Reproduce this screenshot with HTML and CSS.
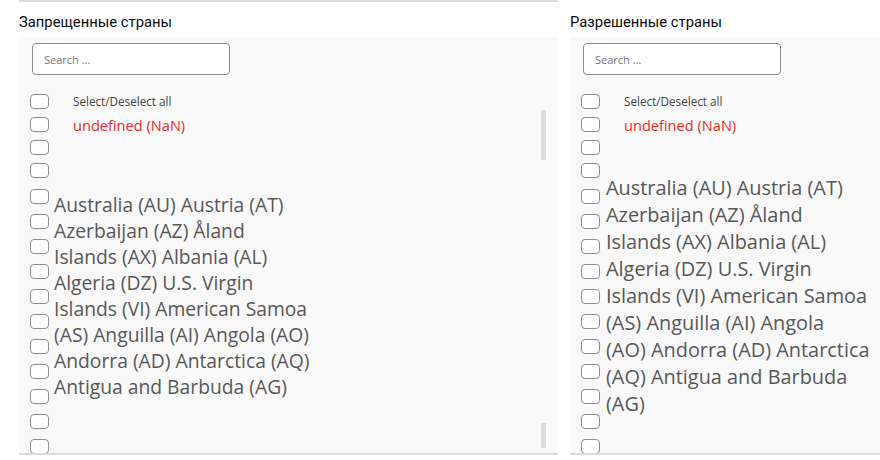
FILE: index.html
```html
<!DOCTYPE html>
<html>
<head>
<meta charset="utf-8">
<link rel="stylesheet" href="styles.css">
</head>
<body>
<div class="page">
  <section class="col col-left">
    <div class="topbar"></div>
    <h2 class="title">Запрещенные страны</h2>
    <div class="panel">
      <div class="search"><span class="ph">Search ...</span></div>
      <div class="list">
        <div class="boxes">
          <div class="row r-sm"><span class="cb"></span><span class="lbl sel">Select/Deselect all</span></div>
          <div class="row r-sm"><span class="cb"></span><span class="lbl red">undefined (NaN)</span></div>
          <div class="row r-sm"><span class="cb"></span></div>
          <div class="row r-sm4"><span class="cb"></span></div>
          <div class="row"><span class="cb"></span></div>
          <div class="row"><span class="cb"></span></div>
          <div class="row"><span class="cb"></span></div>
          <div class="row"><span class="cb"></span></div>
          <div class="row"><span class="cb"></span></div>
          <div class="row"><span class="cb"></span></div>
          <div class="row"><span class="cb"></span></div>
          <div class="row"><span class="cb"></span></div>
          <div class="row"><span class="cb"></span></div>
          <div class="row"><span class="cb"></span></div>
          <div class="row"><span class="cb"></span></div>
        </div>
        <div class="names names-left">Australia (AU) Austria (AT)<br>Azerbaijan (AZ) Åland<br>Islands (AX) Albania (AL)<br>Algeria (DZ) U.S. Virgin<br>Islands (VI) American Samoa<br>(AS) Anguilla (AI) Angola (AO)<br>Andorra (AD) Antarctica (AQ)<br>Antigua and Barbuda (AG)</div>
      </div>
      <div class="sb sb1"></div>
      <div class="sb sb2"></div>
    </div>
  </section>
  <section class="col col-right">
    <h2 class="title">Разрешенные страны</h2>
    <div class="panel">
      <div class="search"><span class="ph">Search ...</span></div>
      <div class="list">
        <div class="boxes">
          <div class="row r-sm"><span class="cb"></span><span class="lbl sel">Select/Deselect all</span></div>
          <div class="row r-sm"><span class="cb"></span><span class="lbl red">undefined (NaN)</span></div>
          <div class="row r-sm"><span class="cb"></span></div>
          <div class="row r-sm4"><span class="cb"></span></div>
          <div class="row"><span class="cb"></span></div>
          <div class="row"><span class="cb"></span></div>
          <div class="row"><span class="cb"></span></div>
          <div class="row"><span class="cb"></span></div>
          <div class="row"><span class="cb"></span></div>
          <div class="row"><span class="cb"></span></div>
          <div class="row"><span class="cb"></span></div>
          <div class="row"><span class="cb"></span></div>
          <div class="row"><span class="cb"></span></div>
          <div class="row"><span class="cb"></span></div>
          <div class="row"><span class="cb"></span></div>
        </div>
        <div class="names names-right">Australia (AU) Austria (AT)<br>Azerbaijan (AZ) Åland<br>Islands (AX) Albania (AL)<br>Algeria (DZ) U.S. Virgin<br>Islands (VI) American Samoa<br>(AS) Anguilla (AI) Angola<br>(AO) Andorra (AD) Antarctica<br>(AQ) Antigua and Barbuda<br>(AG)</div>
      </div>
    </div>
  </section>
</div>
</body>
</html>
```
FILE: styles.css
```css
html, body {
  margin: 0;
  padding: 0;
  background: #ffffff;
  overflow: hidden;
}
.page {
  display: flex;
  gap: 12px;
  padding-left: 19px;
  height: 460px;
}
.col {
  display: flex;
  flex-direction: column;
}
.col-left { width: 540px; }
.col-right { width: 310px; flex: none; }
.topbar {
  height: 2px;
  background: #dcdcdc;
}
.title {
  margin: 0;
  font-family: Roboto, "Liberation Sans", sans-serif;
  font-weight: 400;
  font-size: 14.8px;
  line-height: 16px;
  color: #0a0a0a;
  padding-top: 12px;
  height: 35px;
  box-sizing: border-box;
}
.col-right .title { padding-top: 14px; height: 37px; }
.panel {
  position: relative;
  background: #f9f9f9;
  height: 410px;
  border-bottom: 2px solid #dcdcdc;
  padding: 6px 0 0 11px;
  box-sizing: content-box;
  overflow: hidden;
}
.search {
  width: 198px;
  height: 32px;
  box-sizing: border-box;
  margin-left: 2px;
  border: 1px solid #8c8c8c;
  border-radius: 4px;
  background: #fff;
  display: flex;
  align-items: center;
  padding-left: 11px;
}
.ph {
  font-family: "Open Sans", "Noto Sans", sans-serif;
  font-size: 11px;
  color: #777;
}
.list {
  display: grid;
  margin-top: 19px;
}
.boxes, .names { grid-area: 1 / 1; }
.row {
  display: flex;
  align-items: flex-start;
  height: 25px;
}
.r-sm { height: 23px; }
.r-sm4 { height: 26px; }
.cb {
  flex: none;
  width: 19px;
  height: 15px;
  box-sizing: border-box;
  border: 1px solid #8e8e8e;
  border-radius: 4px;
  background: #fff;
}
.lbl {
  font-family: "Open Sans", "Noto Sans", sans-serif;
  margin-left: 24px;
  white-space: nowrap;
}
.sel {
  font-size: 11.7px;
  color: #444;
  line-height: 15px;
}
.red {
  font-size: 14.6px;
  color: #ee2a2a;
  line-height: 18px;
  margin-top: -1px;
}
.names {
  font-family: "Open Sans", "Noto Sans", sans-serif;
  color: #585858;
  white-space: nowrap;
}
.names-left {
  font-size: 19.3px;
  line-height: 26px;
  margin: 98px 0 0 24px;
}
.names-right {
  font-size: 19.9px;
  line-height: 27px;
  margin: 80px 0 0 25px;
}
.sb {
  position: absolute;
  right: 12px;
  width: 5px;
  background: #dcdcdc;
}
.sb1 { top: 73px; height: 50px; }
.sb2 { top: 386px; height: 25px; }
```
